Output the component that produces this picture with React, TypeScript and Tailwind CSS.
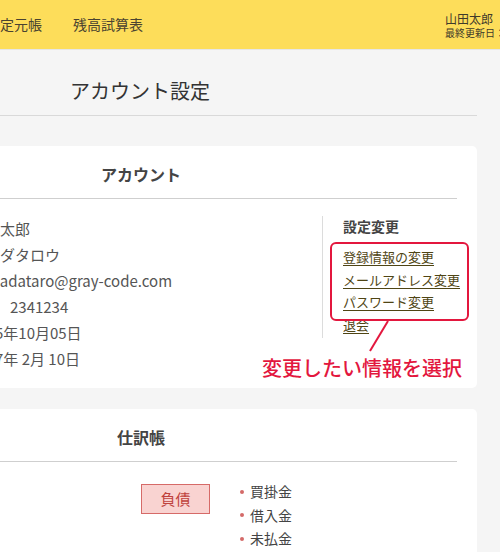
import React from "react";

const accountRows = [
  { label: "氏名", value: "山田太郎" },
  { label: "フリガナ", value: "ヤマダタロウ" },
  { label: "メールアドレス", value: "yamadataro@gray-code.com" },
  { label: "電話番号", value: "090　2341234" },
  { label: "生年月日", value: "1985年10月05日" },
  { label: "登録日", value: "2017年 2月 10日" },
];

const settingLinks = ["登録情報の変更", "メールアドレス変更", "パスワード変更", "退会"];

const liabilities = ["買掛金", "借入金", "未払金"];

export default function App() {
  return (
    <div
      className="relative w-[500px] h-[552px] overflow-hidden bg-[#f5f5f5] text-[#444]"
      style={{ fontFamily: '"Noto Sans CJK JP", "Noto Sans", sans-serif' }}
    >
      {/* Header */}
      <header className="flex h-[50px] items-center border-b border-[#e6e6e6] bg-[#fddd5a]">
        <nav className="ml-[-28px] flex shrink-0 gap-[31px] text-[14px] text-[#4a4330] whitespace-nowrap">
          <span>総勘定元帳</span>
          <span>残高試算表</span>
        </nav>
        <div className="ml-[302px] shrink-0 whitespace-nowrap text-[#3f3a2a]">
          <p className="text-[12px] leading-[15px]">山田太郎</p>
          <p className="text-[10px] leading-[13px]">最終更新日：2017年2月10日</p>
        </div>
      </header>

      {/* Main */}
      <main className="ml-[-195px] w-[672px]">
        <div className="border-b border-[#d9d9d9] pt-[27px] pb-[10px] pl-[265px]">
          <h1 className="text-[20px] leading-[28px] text-[#333]">アカウント設定</h1>
        </div>

        {/* Account card */}
        <section className="mt-[30px] rounded-[5px] bg-white">
          <div className="mx-[20px] border-b border-[#cfcfcf] pt-[16px] pb-[12px] text-center">
            <h2 className="text-[16px] font-bold leading-[24px] text-[#444]">アカウント</h2>
          </div>
          <div className="flex px-[20px] pt-[17px] pb-[16px]">
            <dl className="w-[497px] shrink-0 text-[15px] leading-[26px] text-[#555]">
              {accountRows.map((row) => (
                <div key={row.label} className="flex whitespace-nowrap">
                  <dt className="w-[145px] shrink-0">{row.label}</dt>
                  <dd>{row.value}</dd>
                </div>
              ))}
            </dl>
            <div className="shrink-0 self-start whitespace-nowrap border-l border-[#dcdcdc] pl-[20px] pb-[2px]">
              <h3 className="text-[14px] font-bold leading-[20px] text-[#444]">設定変更</h3>
              <ul className="mt-[10px] text-[13px] leading-[22.5px] text-[#4f4514]">
                {settingLinks.map((link) => (
                  <li key={link}>
                    <a href="#" className="underline decoration-[#4f4514] underline-offset-[3px]">
                      {link}
                    </a>
                  </li>
                ))}
              </ul>
            </div>
          </div>
        </section>

        {/* Journal card */}
        <section className="mt-[21px] h-[200px] rounded-[5px] bg-white">
          <div className="mx-[20px] border-b border-[#cfcfcf] pt-[16px] pb-[12px] text-center">
            <h2 className="text-[16px] font-bold leading-[24px] text-[#444]">仕訳帳</h2>
          </div>
          <div className="flex px-[20px] pt-[18px]">
            <div className="ml-[316px] mt-[4px] flex h-[30px] w-[69px] items-center justify-center border border-[#d66a68] bg-[#f9d3d1] text-[15px] text-[#c0423d]">
              負債
            </div>
            <ul className="ml-[30px] text-[14px] leading-[23.5px] text-[#444]">
              {liabilities.map((item) => (
                <li key={item} className="flex items-center">
                  <span className="mr-[6px] h-[4px] w-[4px] rounded-full bg-[#d46a68]" />
                  {item}
                </li>
              ))}
            </ul>
          </div>
        </section>
      </main>

      {/* Annotation overlay */}
      <div className="absolute left-[330px] top-[242px] h-[79px] w-[139px] rounded-[6px] border-2 border-[#e3173e]" />
      <svg className="absolute left-0 top-0" width="500" height="552" fill="none">
        <line x1="388" y1="321" x2="370" y2="351" stroke="#e3173e" strokeWidth="2" />
      </svg>
      <p className="absolute left-[262px] top-[354px] whitespace-nowrap text-[20px] font-medium leading-[28px] text-[#e3173e]">
        変更したい情報を選択
      </p>
    </div>
  );
}
